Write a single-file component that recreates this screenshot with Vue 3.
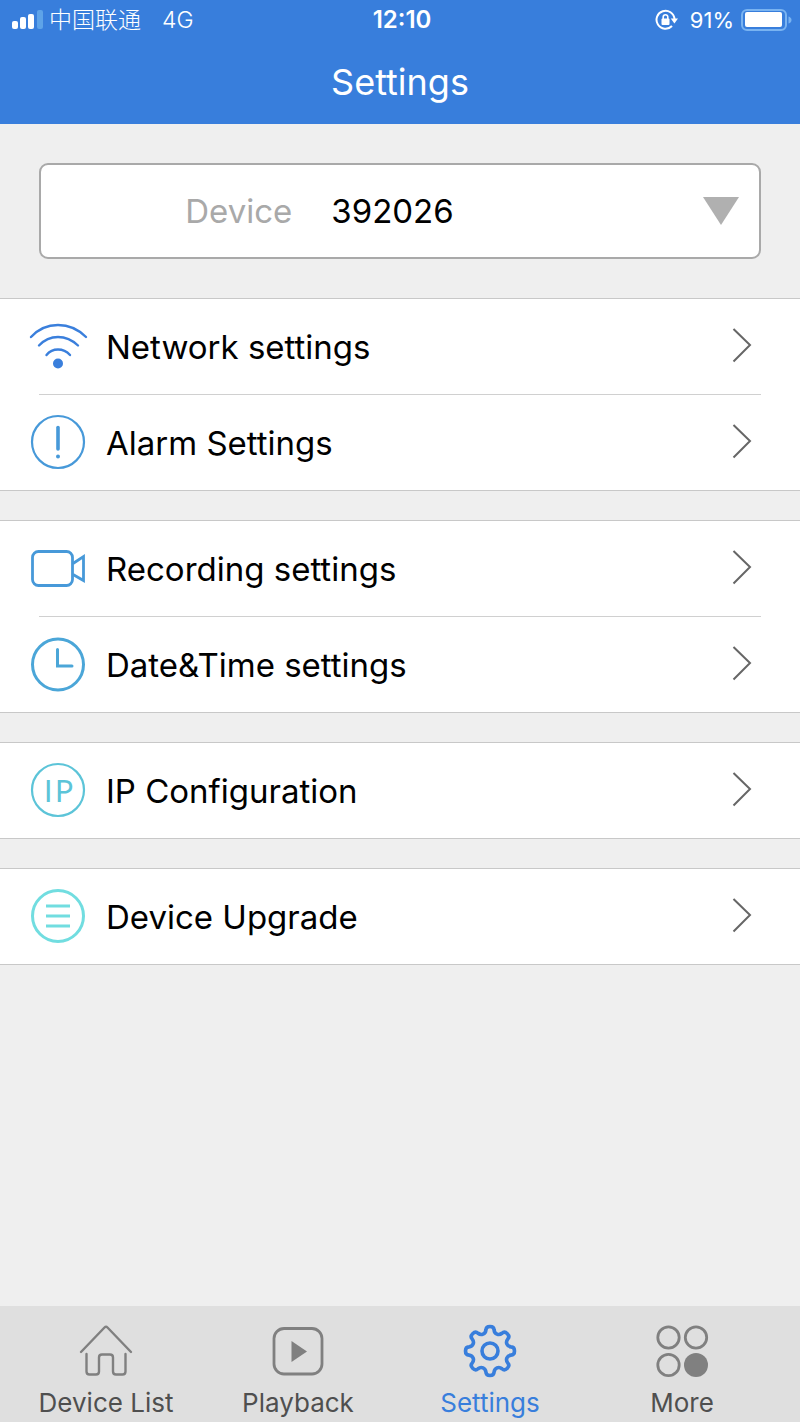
<script setup>
import { ref } from 'vue'

const device = ref('392026')
const activeTab = ref('Settings')

const groups = [
  [
    { label: 'Network settings', icon: 'wifi' },
    { label: 'Alarm Settings', icon: 'alarm' },
  ],
  [
    { label: 'Recording settings', icon: 'camera' },
    { label: 'Date&Time settings', icon: 'clock' },
  ],
  [{ label: 'IP Configuration', icon: 'ip' }],
  [{ label: 'Device Upgrade', icon: 'upgrade' }],
]

const tabs = [
  { label: 'Device List', icon: 'home' },
  { label: 'Playback', icon: 'play' },
  { label: 'Settings', icon: 'gear' },
  { label: 'More', icon: 'more' },
]

// One gear tooth around the vertical axis; the outline repeats it eight times.
const tooth = [
  [-4.8, -17.8], [-4.3, -19], [-4.1, -21],
  [-4, -23.6], [-2.4, -24.5], [0, -24.5],
  [2.4, -24.5], [4, -23.6], [4.1, -21],
  [4.3, -19], [4.8, -17.8], [7, -16.9],
]
const turn = ([x, y], a) =>
  `${(27 + x * Math.cos(a) - y * Math.sin(a)).toFixed(2)} ${(27 + x * Math.sin(a) + y * Math.cos(a)).toFixed(2)}`
let gearPath = `M${turn([-7, -16.9], 0)}`
for (let i = 0; i < 8; i++) {
  gearPath += 'C' + tooth.map((p) => turn(p, (i * Math.PI) / 4)).join(' ')
}
gearPath += 'Z'
</script>

<template>
  <div class="app">
    <header class="header">
      <div class="status">
        <div class="status-left">
          <svg class="signal" width="31" height="20" viewBox="0 0 31 20" aria-hidden="true">
            <rect x="0" y="11" width="6" height="8" rx="2" fill="#fff" />
            <rect x="8" y="7" width="6" height="12" rx="2" fill="#fff" />
            <rect x="16" y="4" width="6" height="15" rx="2" fill="#fff" />
            <rect x="25" y="0" width="6" height="19" rx="2" fill="#5ea3e8" />
          </svg>
          <span class="carrier">中国联通</span>
          <span>4G</span>
        </div>
        <time class="clock">12:10</time>
        <div class="status-right">
          <svg class="lock" width="24" height="22" viewBox="0 0 24 22" fill="none" stroke="#fff" stroke-width="2" aria-hidden="true">
            <path d="M17 17A9 9 0 1 1 19.500 10" />
            <path d="M15.800 9.600h7.200l-3.600 5z" fill="#fff" stroke="none" />
            <rect x="6.500" y="9.500" width="8" height="6.500" rx="1" fill="#fff" stroke="none" />
            <path d="M8.200 10V8a2.300 2.300 0 0 1 4.600 0v2" stroke-width="1.600" />
          </svg>
          <span>91%</span>
          <svg class="battery" width="51" height="22" viewBox="0 0 51 22" aria-hidden="true">
            <rect x="1" y="1" width="44" height="20" rx="5" fill="none" stroke="#79b3f1" stroke-width="2" />
            <rect x="4" y="3" width="37" height="15" rx="2" fill="#fff" />
            <path d="M47.500 7.500q3 1 3 3.500t-3 3.500z" fill="#79b3f1" />
          </svg>
        </div>
      </div>
      <h1 class="title">Settings</h1>
    </header>

    <main class="main">
      <div class="device">
        <label class="device-label" for="device">Device</label>
        <select id="device" v-model="device" class="device-select">
          <option value="392026">392026</option>
        </select>
        <svg class="device-arrow" width="36" height="28" viewBox="0 0 36 28" aria-hidden="true">
          <path d="M0 0H36L18 28Z" fill="#b0b0b0" />
        </svg>
      </div>

      <ul v-for="(group, g) in groups" :key="g" class="group">
        <li v-for="item in group" :key="item.label" class="item">
          <button type="button" class="row">
            <svg class="row-icon" viewBox="0 0 60 60" fill="none" aria-hidden="true">
              <g v-if="item.icon === 'wifi'" stroke="#3a7fdc" stroke-width="2.400" stroke-linecap="round">
                <path d="M3 20Q14 8 30 8T58 20" />
                <path d="M11 28.500Q19 20 30 20T50 28.500" />
                <path d="M18.500 38Q23 32.500 30 32.500T42 38" />
                <circle cx="30" cy="46.500" r="5" fill="#3a7fdc" stroke="none" />
              </g>
              <g v-else-if="item.icon === 'alarm'" stroke="#4799d9" stroke-linecap="round">
                <circle cx="30" cy="29" r="26" stroke-width="2.200" />
                <path d="M30 14.500V36" stroke-width="3.600" />
                <circle cx="30" cy="43.500" r="2" fill="#4799d9" stroke="none" />
              </g>
              <g v-else-if="item.icon === 'camera'" stroke="#4799d9" stroke-width="2.800">
                <rect x="4.500" y="12.500" width="40" height="34" rx="6" />
                <path d="M45 24.500L55.500 17.500V41.500L45 35.500" />
              </g>
              <g v-else-if="item.icon === 'clock'" stroke="#4ba6d8" stroke-width="3">
                <circle cx="30" cy="29.500" r="25.500" />
                <path d="M29.500 14.500V31H44" stroke-linecap="round" />
              </g>
              <g v-else-if="item.icon === 'ip'">
                <circle cx="30" cy="29" r="26" stroke="#5cc4d8" stroke-width="2.200" />
                <text class="ip-text" x="16 27" y="41" fill="#5cc4d8">IP</text>
              </g>
              <g v-else stroke="#71dde0" stroke-width="3">
                <circle cx="30" cy="29" r="25.500" />
                <path d="M18 19H42M18 29H42M18 39H42" />
              </g>
            </svg>
            <span class="row-label">{{ item.label }}</span>
            <svg class="chevron" width="20" height="40" viewBox="0 0 20 40" fill="none" stroke="#666" stroke-width="2" aria-hidden="true">
              <path d="M1.500 2L18 18L1.500 34.500" />
            </svg>
          </button>
        </li>
      </ul>
    </main>

    <nav class="tabs">
      <button
        v-for="tab in tabs"
        :key="tab.label"
        type="button"
        class="tab"
        :class="{ active: tab.label === activeTab }"
        @click="activeTab = tab.label"
      >
        <svg class="tab-icon" viewBox="0 0 54 54" fill="none" stroke="currentColor" aria-hidden="true">
          <g v-if="tab.icon === 'home'" stroke-width="2.400" stroke-linecap="round" stroke-linejoin="round">
            <path d="M2 28L25.500 3.500Q27 2 28.500 3.500L52 28" />
            <path d="M7.500 30V47.500Q7.500 50.500 10.500 50.500H17Q20 50.500 20 47.500V33.500Q20 30.500 23 30.500H31Q34 30.500 34 33.500V47.500Q34 50.500 37 50.500H43.500Q46.500 50.500 46.500 47.500V30" />
          </g>
          <g v-else-if="tab.icon === 'play'">
            <rect x="3" y="4.500" width="48" height="45.500" rx="10" stroke-width="2.800" />
            <path d="M20.500 17V38L36 27.500Z" fill="currentColor" stroke="none" />
          </g>
          <g v-else-if="tab.icon === 'gear'" stroke-width="3.600">
            <path :d="gearPath" stroke-linejoin="round" />
            <circle cx="27" cy="27" r="8" />
          </g>
          <g v-else stroke-width="2.800">
            <circle cx="13.500" cy="13.500" r="10.700" />
            <circle cx="41" cy="13.500" r="10.700" />
            <circle cx="13.500" cy="41" r="10.700" />
            <circle cx="41" cy="41" r="12" fill="currentColor" stroke="none" />
          </g>
        </svg>
        <span class="tab-label">{{ tab.label }}</span>
      </button>
    </nav>
  </div>
</template>

<style>
body {
  margin: 0;
  background: #efefef;
}
</style>

<style scoped>
.app {
  display: flex;
  flex-direction: column;
  min-height: 100vh;
  background: #efefef;
  color: #000;
  font-family: Inter, "Noto Sans CJK SC", sans-serif;
}

.header {
  background: #387edc;
  color: #fff;
}

.status {
  display: grid;
  grid-template-columns: 1fr auto 1fr;
  align-items: center;
  height: 40px;
  padding: 0 8px 0 12px;
  font-size: 23px;
  line-height: 40px;
}

.status-left,
.status-right {
  display: flex;
  align-items: center;
}

.status-left {
  font-weight: 300;
}

.status-right {
  justify-content: flex-end;
  font-size: 22px;
}

.carrier {
  margin: 0 21px 0 6px;
}

.clock {
  font-size: 24px;
  font-weight: 600;
}

.lock {
  margin-right: 11px;
}

.battery {
  margin-left: 7px;
}

.title {
  margin: 0;
  font-size: 36px;
  font-weight: 400;
  line-height: 84px;
  text-align: center;
}

.main {
  flex: 1;
}

.device {
  display: grid;
  grid-template-columns: 35% 1fr;
  align-items: center;
  height: 96px;
  margin: 39px;
  box-sizing: border-box;
  border: 2px solid #a9a9a9;
  border-radius: 9px;
  background: #fff;
  font-size: 33px;
}

.device-label {
  grid-area: 1 / 1;
  color: #a9a9a9;
  text-align: right;
}

.device-select {
  grid-area: 1 / 2;
  height: 92px;
  margin: 0;
  padding: 0 60px 0 39px;
  border: 0;
  border-radius: 9px;
  appearance: none;
  background: transparent;
  color: #000;
  font: inherit;
}

.device-arrow {
  grid-area: 1 / 2;
  justify-self: end;
  margin-right: 20px;
  pointer-events: none;
}

.group {
  margin: 0 0 29px;
  padding: 0;
  border-top: 1px solid #c8c8c8;
  border-bottom: 1px solid #c8c8c8;
  background: #fff;
  list-style: none;
}

.item + .item::before {
  content: "";
  display: block;
  height: 1px;
  margin: 0 39px;
  background: #d0d0d0;
}

.row {
  display: flex;
  align-items: center;
  gap: 18px;
  width: 100%;
  height: 95px;
  padding: 0 48px 0 28px;
  border: 0;
  background: transparent;
  color: inherit;
  font: inherit;
  font-size: 33px;
  text-align: left;
}

.row-icon {
  flex: none;
  width: 60px;
  height: 60px;
}

.ip-text {
  font-family: Lato, sans-serif;
  font-size: 30px;
}

.row-label {
  flex: 1;
}

.chevron {
  flex: none;
}

.tabs {
  display: grid;
  grid-template-columns: repeat(4, 1fr);
  height: 116px;
  padding: 0 22px 0 10px;
  background: #dfdfdf;
}

.tab {
  display: flex;
  flex-direction: column;
  align-items: center;
  gap: 8px;
  padding: 18px 0 0;
  border: 0;
  background: transparent;
  color: #808080;
  font: inherit;
  font-size: 26px;
  line-height: 34px;
}

.tab-icon {
  width: 54px;
  height: 54px;
}

.tab-label {
  color: #4f4f4f;
  white-space: nowrap;
}

.active,
.active .tab-label {
  color: #387edc;
}
</style>
